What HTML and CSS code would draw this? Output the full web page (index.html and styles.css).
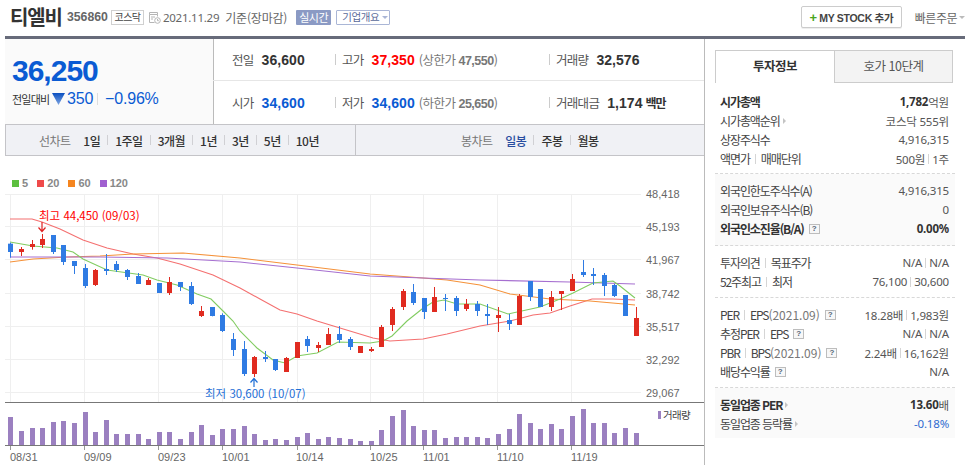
FILE: index.html
```html
<!DOCTYPE html>
<html lang="ko">
<head>
<meta charset="utf-8">
<title>티엘비</title>
<link rel="stylesheet" href="styles.css">
</head>
<body>
<div class="page">
  <header class="top">
    <div class="top-left">
      <h1 class="name">티엘비</h1>
      <span class="code">356860</span>
      <span class="tag">코스닥</span>
      <svg class="cal" width="13" height="13" viewBox="0 0 13 13"><path d="M1.5 1.5h8v2h-8zM1.5 3.5v8h5M9.5 3.500v2M3 6h4M3 8h2" fill="none" stroke="#b5b5b5"/><circle cx="9.500" cy="9.500" r="2.800" fill="#fff" stroke="#b5b5b5"/><path d="M9.500 8v1.700h1.300" fill="none" stroke="#b5b5b5"/></svg>
      <span class="date">2021.11.29</span>
      <span class="date-note">기준(장마감)</span>
      <span class="live">실시간</span>
      <span class="overview">기업개요<i class="caret caret-blue"></i></span>
    </div>
    <div class="top-right">
      <button class="mystock"><b class="plus">+</b> MY STOCK 추가</button>
      <span class="quick">빠른주문<i class="caret"></i></span>
    </div>
  </header>

  <main class="main">
    <section class="left">
      <div class="summary">
        <div class="now">
          <div class="price">36,250</div>
          <div class="change">
            <span class="change-label">전일대비</span>
            <svg class="down" width="13" height="12" viewBox="0 0 13 12"><defs><linearGradient id="dn" x1="0" y1="0" x2="0" y2="1"><stop offset="0" stop-color="#0a4fc0"/><stop offset="1" stop-color="#7fa6e2"/></linearGradient></defs><path d="M0 0h13L6.500 12z" fill="url(#dn)"/></svg>
            <span class="change-num">350</span>
            <span class="change-bar"></span>
            <span class="change-num">−0.96%</span>
          </div>
        </div>
        <div class="stats">
          <div class="stat s1"><span class="k">전일</span><b class="v">36,600</b></div>
          <div class="stat s2"><span class="k">고가</span><b class="v up">37,350</b><span class="limit">(상한가 <em>47,550</em>)</span></div>
          <div class="stat s3"><span class="k">거래량</span><b class="v">32,576</b></div>
          <div class="stat s1"><span class="k">시가</span><b class="v dn">34,600</b></div>
          <div class="stat s2"><span class="k">저가</span><b class="v dn">34,600</b><span class="limit">(하한가 <em>25,650</em>)</span></div>
          <div class="stat s3"><span class="k">거래대금</span><b class="v">1,174</b><b class="unit">백만</b></div>
        </div>
      </div>

      <nav class="tools">
        <div class="tools-line">
          <span class="tools-title">선차트</span>
          <a>1일</a><a>1주일</a><a>3개월</a><a>1년</a><a>3년</a><a>5년</a><a>10년</a>
        </div>
        <div class="tools-candle">
          <span class="tools-title">봉차트</span>
          <a class="on">일봉</a><a>주봉</a><a>월봉</a>
        </div>
      </nav>

      <div class="chart">
        <div class="legend">
          <span class="lg"><i class="sw sw-5"></i>5</span>
          <span class="lg"><i class="sw sw-20"></i>20</span>
          <span class="lg"><i class="sw sw-60"></i>60</span>
          <span class="lg"><i class="sw sw-120"></i>120</span>
        </div>
        <svg id="plot" class="plot" width="699" height="282" viewBox="5 183 699 282">
          <g id="grid"></g>
          <g id="lines"></g>
          <g id="candles"></g>
          <g id="volume"></g>
          <path d="M42 221v9M38.500 226.500l3.500 4 3.500-4" fill="none" stroke="#e02020" stroke-width="1.200"/>
          <path d="M254 386v-8M250.500 381.500l3.500-4 3.500 4" fill="none" stroke="#1f6fd6" stroke-width="1.200"/>
          <text class="note note-hi" x="39" y="219">최고 44,450 (09/03)</text>
          <text class="note note-lo" x="205" y="397">최저 30,600 (10/07)</text>
          <g class="yl">
            <text x="646" y="197">48,418</text>
            <text x="646" y="230">45,193</text>
            <text x="646" y="263">41,967</text>
            <text x="646" y="297">38,742</text>
            <text x="646" y="330">35,517</text>
            <text x="646" y="363">32,292</text>
            <text x="646" y="396">29,067</text>
          </g>
          <g class="xl">
            <text x="10" y="460">08/31</text>
            <text x="84" y="460">09/09</text>
            <text x="158" y="460">09/23</text>
            <text x="222" y="460">10/01</text>
            <text x="296" y="460">10/14</text>
            <text x="370" y="460">10/25</text>
            <text x="423" y="460">11/01</text>
            <text x="497" y="460">11/10</text>
            <text x="571" y="460">11/19</text>
          </g>
          <rect x="658" y="410" width="3" height="8" fill="#9b80c0"/>
          <text class="vol-label" x="663" y="418">거래량</text>
        </svg>
      </div>
    </section>

    <aside class="side">
      <div class="tabs">
        <div class="tab tab-on">투자정보</div>
        <div class="tab">호가 10단계</div>
      </div>

      <div class="sec sec-first">
        <div class="row strong"><span>시가총액</span><span><b>1,782</b>억원</span></div>
        <div class="row"><span>시가총액순위<i class="tri"></i></span><span>코스닥 555위</span></div>
        <div class="row"><span>상장주식수</span><span>4,916,315</span></div>
        <div class="row"><span>액면가<i class="sep"></i>매매단위</span><span>500원<i class="sep"></i>1주</span></div>
      </div>
      <div class="sec shade sec-foreign">
        <div class="row"><span>외국인한도주식수(A)</span><span>4,916,315</span></div>
        <div class="row"><span>외국인보유주식수(B)</span><span>0</span></div>
        <div class="row strong"><span>외국인소진율(B/A)<i class="help">?</i></span><span><b>0.00%</b></span></div>
      </div>
      <div class="sec sec-wide">
        <div class="row"><span>투자의견<i class="sep"></i>목표주가</span><span>N/A<i class="sep"></i>N/A</span></div>
        <div class="row"><span>52주최고<i class="sep"></i>최저</span><span>76,100<i class="sep"></i>30,600</span></div>
      </div>
      <div class="sec sec-wide">
        <div class="row"><span>PER<i class="sep"></i>EPS<span class="thin">(2021.09)</span><i class="help">?</i></span><span>18.28배<i class="sep"></i>1,983원</span></div>
        <div class="row"><span>추정PER<i class="sep"></i>EPS<i class="help">?</i></span><span>N/A<i class="sep"></i>N/A</span></div>
        <div class="row"><span>PBR<i class="sep"></i>BPS <span class="thin">(2021.09)</span><i class="help">?</i></span><span>2.24배<i class="sep"></i>16,162원</span></div>
        <div class="row"><span>배당수익률<i class="help">?</i></span><span>N/A</span></div>
      </div>
      <div class="sec shade sec-last">
        <div class="row strong"><span>동일업종 PER<i class="tri"></i></span><span><b>13.60</b>배</span></div>
        <div class="row"><span>동일업종 등락률<i class="tri"></i></span><span class="neg">-0.18%</span></div>
      </div>
    </aside>
  </main>
</div>
<script src="chart.js"></script>
</body>
</html>
```

FILE: styles.css
```css
* { box-sizing: border-box; }
html, body { margin: 0; padding: 0; background: #fff; }
body {
  font-family: "Noto Sans CJK KR", "Liberation Sans", sans-serif;
  font-size: 12px;
  color: #333;
  overflow: hidden;
}
.page { width: 971px; height: 465px; padding: 0 6px 0 5px; }

/* header */
.top { height: 36px; display: flex; justify-content: space-between; align-items: center; padding: 0 0 2px 5px; }
.top-left, .top-right { display: flex; align-items: center; }
.name { margin: 0; font-size: 20px; font-weight: 700; color: #333; letter-spacing: -1.1px; line-height: 28px; }
.code { margin-left: 5px; font: 700 12.300px "Liberation Sans", sans-serif; color: #666; }
.tag { margin-left: 3px; width: 33px; height: 15px; border: 1px solid #d0d0d0; font-size: 10px; line-height: 12px; text-align: center; letter-spacing: -.6px; color: #444; }
.cal { margin-left: 4px; }
.date { margin-left: 2px; font: 11.500px "Noto Sans", sans-serif; color: #666; letter-spacing: -.25px; }
.date-note { margin-left: 6px; color: #666; letter-spacing: -.2px; font-size: 12px; }
.live { margin-left: 9px; width: 35px; height: 15px; background: #8b9ac4; color: #fff; font-size: 11px; line-height: 14px; text-align: center; border-radius: 1px; letter-spacing: -.5px; }
.overview { margin-left: 5px; width: 54px; height: 15px; border: 1px solid #aab6d6; color: #5a6a9a; font-size: 10.500px; line-height: 12px; padding-left: 5px; letter-spacing: -.4px; border-radius: 1px; white-space: nowrap; }
.caret { display: inline-block; margin-left: 3px; border: 3px solid transparent; border-top: 3px solid #bbb; border-bottom: 0; vertical-align: middle; }
.caret-blue { border-top-color: #aab6d6; }
.mystock { width: 101px; height: 22px; padding: 0; background: #fff; border: 1px solid #ccc; border-radius: 2px; box-shadow: 0 1px 0 #eee; font: 700 10.500px "Liberation Sans", "Noto Sans CJK KR", sans-serif; color: #444; letter-spacing: -.3px; white-space: nowrap; }
.plus { color: #4aa520; font-size: 13px; }
.quick { margin-left: 13px; font-size: 12px; color: #666; letter-spacing: -.5px; white-space: nowrap; display: flex; align-items: center; }
.quick .caret { margin-left: 2px; }

.main { display: flex; border-top: 3px solid #676b7a; height: 429px; }

/* left */
.left { width: 700px; border-right: 1px solid #bbb; }
.summary { display: flex; height: 85px; }
.now { width: 209px; background: #fafafa; border-right: 1px solid #bbb; padding: 15px 0 0 7px; }
.price { font: 700 30px/34px "Liberation Sans", sans-serif; color: #0a5bd3; letter-spacing: -1px; }
.change { display: flex; align-items: center; margin-top: 1px; height: 20px; }
.change-label { font-size: 11px; letter-spacing: -.8px; color: #333; width: 40px; white-space: nowrap; }
.change-num { font: 16px "Liberation Sans", sans-serif; color: #0a5bd3; margin-left: 2px; letter-spacing: -.2px; }
.change-bar { width: 1px; height: 12px; background: #ddd; margin: 0 7px 0 4px; }
.change-bar + .change-num { margin-left: 0; }
.stats { flex: 1; display: grid; grid-template-columns: 122px 214px 1fr; grid-template-rows: 42px 43px; margin-left: -1px; }
.stat { display: flex; align-items: center; white-space: nowrap; }
.stat:nth-child(-n+3) { border-bottom: 1px solid #e6e6e6; }
.s1 { padding-left: 19px; }
.s2, .s3 { padding-left: 7px; position: relative; }
.s2::before, .s3::before { content: ""; position: absolute; left: 0; top: 50%; margin-top: -6px; width: 1px; height: 11px; background: #ccc; }
.k { font-size: 12.500px; color: #555; letter-spacing: -.7px; }
.v { font: 700 14px "Liberation Sans", sans-serif; color: #333; margin-left: 8px; letter-spacing: .05px; }
.up { color: #f00; }
.dn { color: #0a5bd3; }
.limit { margin-left: 4px; font-size: 12.500px; color: #777; letter-spacing: -.5px; }
.limit em { font: 700 12.500px "Liberation Sans", sans-serif; color: #777; }
.unit { margin-left: 3px; font-size: 12px; letter-spacing: -1px; }

.tools { display: flex; height: 32px; background: #f0f1f5; border: 1px solid #c4c4c8; border-right: 0; font-size: 12px; }
.tools-line { width: 350px; border-right: 1px solid #c4c4c8; display: flex; align-items: center; padding-left: 33px; }
.tools-candle { flex: 1; display: flex; align-items: center; padding-left: 105px; }
.tools-title { color: #777; letter-spacing: -.6px; margin-right: 13px; }
.tools a { color: #333; letter-spacing: -.5px; font-weight: 500; padding: 0 7px 0 8px; position: relative; white-space: nowrap; }
.tools a + a::before { content: ""; position: absolute; left: 0; top: 50%; margin-top: -5px; width: 1px; height: 10px; background: #d0d0d4; }
.tools a:first-of-type { padding-left: 0; }
.tools a.on { color: #2a4ea0; }

.chart { height: 310px; }
.legend { display: flex; height: 28px; padding: 20px 0 0 7px; }
.lg { display: flex; align-items: center; height: 14px; margin-right: 9px; font: 700 11px "Liberation Sans", sans-serif; color: #888; }
.sw { width: 7px; height: 7px; margin-right: 3px; }
.sw-5 { background: #5cbf3f; }
.sw-20 { background: #ef4a4a; }
.sw-60 { background: #f5851f; }
.sw-120 { background: #a060d0; }
.plot { display: block; }
.yl text, .xl text { font: 11px "Liberation Sans", sans-serif; fill: #666; }
.note { font: 11.500px "Noto Sans CJK KR", sans-serif; }
.note-hi { fill: #f00; }
.note-lo { fill: #1f6fd6; }
.vol-label { font: 10.500px "Noto Sans CJK KR", sans-serif; fill: #444; letter-spacing: -.6px; }

/* right */
.side { width: 260px; padding: 11px 0 0 10px; }
.tabs { display: flex; width: 238px; height: 33px; }
.tab { width: 119px; background: #f3f3f3; border: 1px solid #ccc; text-align: center; line-height: 30px; font-size: 12.500px; color: #555; letter-spacing: -.5px; }
.tab-on { background: #fff; border-bottom: 0; border-right: 0; font-weight: 700; color: #333; }
.sec { width: 240px; padding: 7px 6px 5px 5px; border-bottom: 1px dashed #d8d8d8; }
.sec-first { padding-top: 9px; }
.sec-foreign { padding-bottom: 7px; }
.sec-wide { padding-bottom: 6px; }
.shade { background: #fafafa; }
.sec-last { border-bottom: 0; }
.row { display: flex; justify-content: space-between; align-items: center; height: 19px; font-size: 12px; color: #444; white-space: nowrap; }
.row > span:first-child { letter-spacing: -1.1px; display: flex; align-items: center; }
.row > span:last-child { font: 11.500px "Noto Sans", "Noto Sans CJK KR", sans-serif; letter-spacing: -.2px; display: flex; align-items: center; color: #555; }
.row b { font-weight: 700; color: #333; }
.strong > span:first-child { font-weight: 700; color: #333; }
.thin { color: #777; letter-spacing: 0; }
.sep { display: inline-block; width: 1px; height: 10px; background: #d5d5d5; margin: 0 5px; }
.row > span:last-child .sep { margin: 0 3px; }
.tri { display: inline-block; margin-left: 3px; border: 3px solid transparent; border-left: 3px solid #c4c4c4; border-right: 0; }
.help { display: inline-block; width: 11px; height: 10px; margin-left: 5px; border: 1px solid #bdbdbd; background: #f7f7f7; font: 700 8px/8px "Liberation Sans", sans-serif; text-align: center; color: #567; font-style: normal; letter-spacing: 0; }
.neg { color: #2f6bd0 !important; }
```

FILE: chart.js
```js
(function () {
  var NS = 'http://www.w3.org/2000/svg';
  function el(parent, name, attrs) {
    var n = document.createElementNS(NS, name);
    for (var k in attrs) n.setAttribute(k, attrs[k]);
    parent.appendChild(n);
    return n;
  }
  function cx(i) { return Math.round(10.3 + 10.6 * i) + 0.5; }
  function y3(z) { return 170 + z / 3; }

  var grid = document.getElementById('grid');
  [193, 225, 258, 292, 325, 358, 391].forEach(function (y) {
    el(grid, 'line', { x1: 5, x2: 641, y1: y + 0.5, y2: y + 0.5, stroke: '#efefef' });
  });
  [10, 84, 158, 222, 297, 370, 423, 497, 571].forEach(function (x) {
    el(grid, 'line', { x1: x + 0.5, x2: x + 0.5, y1: 193, y2: 401, stroke: '#efefef' });
    el(grid, 'line', { x1: x + 0.5, x2: x + 0.5, y1: 445, y2: 449, stroke: '#999' });
  });
  el(grid, 'line', { x1: 5, x2: 704, y1: 401.5, y2: 401.5, stroke: '#777' });
  el(grid, 'line', { x1: 5, x2: 704, y1: 444.5, y2: 444.5, stroke: '#777' });

  var lines = {
    '#f47070': [[10,218],[32,218],[42,221],[60,228],[83,239],[107,247],[133,253],[157,257],[180,263],[213,274],[240,287],[260,298],[280,309],[297,313],[317,320],[340,327],[373,337],[390,340],[423,338],[447,333],[480,325],[510,320],[533,314],[550,312],[570,305],[592,298],[613,298],[635,299]],
    '#f5923a': [[10,261],[33,258],[67,256],[100,255],[133,253],[183,252],[240,257],[297,264],[370,273],[423,277],[447,279],[480,284],[510,293],[550,298],[590,300],[635,304]],
    '#a66fd0': [[10,256],[100,256],[167,257],[240,261],[297,267],[370,275],[423,277],[480,279],[570,281],[635,283]],
    '#82cc62': [[10,241],[33,245],[57,247],[73,251],[83,258],[107,269],[143,274],[157,279],[177,284],[197,293],[211,298],[223,310],[233,320],[240,330],[257,347],[273,359],[285,362],[297,355],[317,352],[338,341],[370,342],[383,340],[392,335],[407,320],[422,308],[433,301],[444,299],[457,303],[480,303],[508,313],[540,306],[560,298],[573,292],[593,282],[613,280],[620,285],[635,297]]
  };
  var lg = document.getElementById('lines');
  Object.keys(lines).forEach(function (c) {
    el(lg, 'polyline', { points: lines[c].join(' '), fill: 'none', stroke: c, 'stroke-width': 1.1 });
  });

  var candles = [
    'b215,218,243,260','r228,234,243,255','r207,219,228,236','r189,204,222,231','b192,192,243,249',
    'b222,222,273,282','b270,270,285,309','b279,291,345,351','r294,297,342,345','b249,294,300,312',
    'b270,279,297,303','b294,297,318,327','b306,315,339,339','r321,327,342,342','b336,336,366,366',
    'r318,333,366,372','b333,333,348,360','b333,345,399,402','r405,420,435,438','b408,408,435,436',
    'b427,432,480,483','b486,504,537,555','b510,534,609,615','r555,558,609,618','b540,558,564,573',
    'b564,564,597,600','r558,561,603,603','r513,513,561,561','b495,504,525,543','r513,522,531,543',
    'r471,489,522,522','b465,489,507,516','b498,504,528,537','r525,525,546,546','r528,534,540,543',
    'r462,468,528,528','r408,414,462,480','r354,360,408,417','b339,363,396,402','b381,381,423,444',
    'r348,378,423,423','b369,381,384,420','b375,381,420,435','r384,399,414,420','b390,399,420,435',
    'b399,429,435,462','r408,432,441,483','b429,447,459,477','r369,375,462,462','b330,330,378,390',
    'b354,354,408,408','r360,378,408,420','r360,360,369,417','r309,324,360,360','b267,303,312,318',
    'b291,309,315,342','b306,312,345,375','b339,342,375,378','b372,372,435,435','r408,441,495,495'
  ];
  var cg = document.getElementById('candles');
  candles.forEach(function (s, i) {
    var c = s[0] === 'r' ? '#e02b20' : '#2f7be3';
    var v = s.slice(1).split(',').map(Number);
    var x = cx(i);
    el(cg, 'line', { x1: x, x2: x, y1: y3(v[0]), y2: y3(v[3]), stroke: c });
    el(cg, 'rect', { x: x - 2.5, y: y3(v[1]), width: 5, height: Math.max(1, (v[2] - v[1]) / 3), fill: c });
  });

  var vols = [288,330,321,321,303,300,306,273,333,297,339,339,339,354,333,333,354,333,312,342,324,324,
    315,339,357,354,357,348,336,354,348,351,354,360,360,327,285,267,315,327,327,351,348,348,
    348,351,339,324,279,306,324,309,324,285,264,306,306,336,321,336];
  var vg = document.getElementById('volume');
  vols.forEach(function (z, i) {
    var t = 320 + z / 3;
    el(vg, 'rect', { x: cx(i) - 2.5, y: t, width: 5, height: 444 - t, fill: '#9b80c0' });
  });
})();
```
